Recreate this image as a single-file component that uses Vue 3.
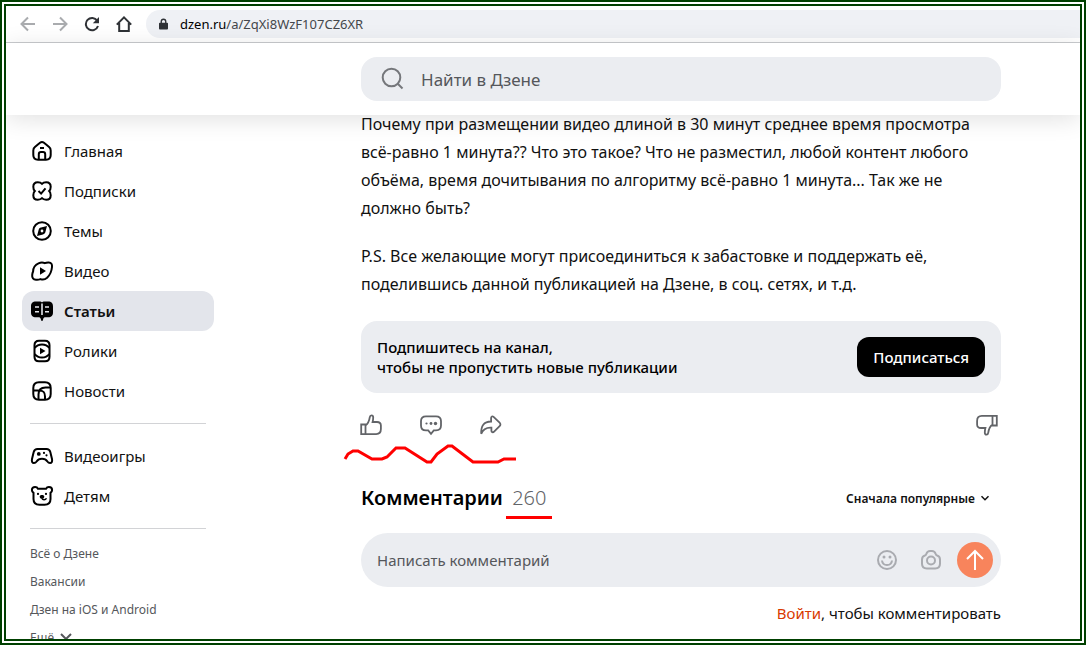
<template>
  <div class="frame">
    <nav class="browser-bar">
      <button class="nav-btn faded" aria-label="Назад">
        <svg viewBox="0 0 16 16"><path d="M15 8H2M8 1.5L1.5 8 8 14.5" /></svg>
      </button>
      <button class="nav-btn faded" aria-label="Вперёд">
        <svg viewBox="0 0 16 16"><path d="M1 8h13M8 1.5L14.5 8 8 14.5" /></svg>
      </button>
      <button class="nav-btn" aria-label="Обновить">
        <svg viewBox="0 0 16 16">
          <path d="M13.2 4.6A6.2 6.2 0 1 0 14 10" />
          <path class="solid" d="M15 1v6.2H8.8z" />
        </svg>
      </button>
      <button class="nav-btn" aria-label="Домой">
        <svg viewBox="0 0 16 16"><path d="M.8 8.6L8 1.4l7.2 7.2M3.2 7v8h9.6V7" /></svg>
      </button>
      <div class="address">
        <svg class="lock" viewBox="0 0 10 12">
          <path d="M1 4.5h8a1 1 0 0 1 1 1V11a1 1 0 0 1-1 1H1a1 1 0 0 1-1-1V5.500a1 1 0 0 1 1-1z" />
          <path class="shackle" d="M2.500 5V3.200a2.500 2.500 0 0 1 5 0V5" />
        </svg>
        <span>dzen.ru<span class="path">/a/ZqXi8WzF107CZ6XR</span></span>
      </div>
    </nav>

    <header class="header">
      <label class="search">
        <svg viewBox="0 0 24 24"><circle cx="10.500" cy="10.500" r="8.800" /><path d="M17 17l4.500 4.500" /></svg>
        <input type="search" placeholder="Найти в Дзене" aria-label="Найти в Дзене" />
      </label>
    </header>

    <div class="columns">
      <aside class="sidebar">
        <template v-for="(group, idx) in menu" :key="idx">
          <ul class="menu">
            <li v-for="item in group" :key="item.title">
              <a href="#" class="menu-item" :class="{ active: item.active }">
                <svg class="menu-icon" viewBox="0 0 24 24">
                  <path v-for="(p, i) in item.paths" :key="i" :d="p.d" :class="p.kind" />
                </svg>
                {{ item.title }}
              </a>
            </li>
          </ul>
          <hr />
        </template>
        <ul class="links">
          <li v-for="link in links" :key="link"><a href="#">{{ link }}</a></li>
          <li>
            <button class="more">
              Ещё
              <svg viewBox="0 0 12 12"><path d="M1 2l5 5 5-5" /></svg>
            </button>
          </li>
        </ul>
      </aside>

      <main class="article">
        <p>
          Почему при размещении видео длиной в 30 минут среднее время просмотра<br />
          всё-равно 1 минута?? Что это такое? Что не разместил, любой контент любого<br />
          объёма, время дочитывания по алгоритму всё-равно 1 минута... Так же не<br />
          должно быть?
        </p>
        <p>
          P.S. Все желающие могут присоединиться к забастовке и поддержать её,<br />
          поделившись данной публикацией на Дзене, в соц. сетях, и т.д.
        </p>

        <section class="subscribe">
          <div>Подпишитесь на канал,<br />чтобы не пропустить новые публикации</div>
          <button>Подписаться</button>
        </section>

        <div class="actions">
          <button aria-label="Нравится">
            <svg viewBox="0 0 24 24">
              <path d="M2.200 11.500h4.300v9.600H2.200zM6.500 12.500c3-2 3.800-5 4.300-8.300.2-1.300.8-1.900 1.700-1.900 1.200 0 1.700.9 1.700 2.200 0 1.700-.2 3-.6 4.500H18c2.500 0 3.900 1.300 3.900 3.600v3.500c0 3.300-1.500 5-4.700 5H6.500" />
            </svg>
          </button>
          <button aria-label="Комментарии">
            <svg viewBox="0 0 24 24">
              <path d="M7 3.300h10c3.500 0 5 1.500 5 4.800v4.500c0 3.300-1.500 4.800-5 4.800h-2.200L12 20.800l-2.800-3.400H7c-3.500 0-5-1.500-5-4.800V8.100c0-3.300 1.500-4.800 5-4.800z" />
              <circle class="dot" cx="7.500" cy="10.500" r="1.100" />
              <circle class="dot" cx="12" cy="10.500" r="1.400" />
              <circle class="dot" cx="16.500" cy="10.500" r="1.700" />
            </svg>
          </button>
          <button aria-label="Поделиться">
            <svg viewBox="0 0 24 24">
              <path d="M2.200 20.800c-.3-7.800 2.500-12.300 9.900-12.300V5c0-1.500 1.300-2.100 2.500-1.100l6 5.800c1.100 1.100 1.100 2.300 0 3.400l-5.500 5.500c-1.200 1.200-2.700.7-2.700-.9v-3c-5.300-.3-8.300 1.300-10.200 6.100z" />
            </svg>
          </button>
          <button class="dislike" aria-label="Не нравится">
            <svg viewBox="0 0 24 24">
              <path d="M21.800 12.500h-4.300V2.900h4.300zM17.500 11.500c-3 2-3.800 5-4.300 8.300-.2 1.300-.8 1.900-1.700 1.900-1.200 0-1.700-.9-1.700-2.200 0-1.700.2-3 .6-4.500H6c-2.500 0-3.900-1.300-3.900-3.600V7.900c0-3.300 1.500-5 4.700-5h10.700" />
            </svg>
          </button>
          <svg class="scribble" viewBox="0 0 174 22">
            <path d="M2 15l3-5 5-3h5l14 8h10l5-2 9-9h9l22 14h4l6-8 11-8h4l21 16h25l6-3h12" />
          </svg>
        </div>

        <div class="comments-head">
          <h2>Комментарии <span class="count">260</span></h2>
          <div class="sort">
            <select aria-label="Порядок комментариев">
              <option>Сначала популярные</option>
            </select>
            <svg viewBox="0 0 10 10"><path d="M1.500 3.200L5 6.700l3.500-3.500" /></svg>
          </div>
        </div>

        <form class="comment-box" @submit.prevent>
          <input v-model="comment" placeholder="Написать комментарий" aria-label="Написать комментарий" />
          <button type="button" class="tool" aria-label="Смайлики">
            <svg viewBox="0 0 24 24">
              <circle cx="12" cy="12" r="9" />
              <path d="M7 12.500c.3 2.800 2.200 4.500 5 4.500s4.700-1.700 5-4.500" />
              <circle class="dot" cx="9" cy="9" r="1.500" />
              <circle class="dot" cx="15" cy="9" r="1.500" />
            </svg>
          </button>
          <button type="button" class="tool" aria-label="Фото">
            <svg viewBox="0 0 24 24">
              <path d="M3 11.500c0-2.300.9-3.500 2.900-4 .8-.2 1.100-.6 1.400-1.500.7-2 1.700-3 3.700-3h2c2 0 3 1 3.700 3 .3.900.6 1.300 1.400 1.500 2 .5 2.900 1.700 2.900 4v4.300c0 3.500-1.500 4.700-4.800 4.700H7.800C4.500 20.500 3 19.300 3 15.800z" />
              <circle cx="12" cy="12.500" r="4" />
            </svg>
          </button>
          <button class="send" aria-label="Отправить">
            <svg viewBox="0 0 24 24"><path d="M12 22V3M4 11l8-8 8 8" /></svg>
          </button>
        </form>
        <div class="login"><a href="#">Войти</a>, чтобы комментировать</div>
      </main>
    </div>
  </div>
</template>

<script setup>
import { ref } from 'vue'

const comment = ref('')

const menu = [
  [
    {
      title: 'Главная',
      paths: [
        { d: 'M3.300 11.500c0-1.500.5-2.600 1.600-3.500L10 3.800c1.200-1 2.800-1 4 0L19.100 8c1.100.9 1.600 2 1.600 3.500V16c0 3.200-1.500 4.700-4.700 4.700H8c-3.200 0-4.700-1.500-4.700-4.700z' },
        { d: 'M8.800 20.500v-5.300c0-1.500.8-2.200 2.200-2.200h2c1.400 0 2.200.7 2.200 2.200v5.300M10 8.900h4' }
      ]
    },
    {
      title: 'Подписки',
      paths: [
        { d: 'M12 4.800c.9-1 2.400-1.500 4.200-1.500 3 0 4.500 1.500 4.500 4.500 0 1.800-.5 3.300-1.500 4.200 1 .9 1.500 2.400 1.500 4.200 0 3-1.500 4.500-4.500 4.500-1.800 0-3.300-.5-4.200-1.500-.9 1-2.400 1.500-4.200 1.500-3 0-4.500-1.500-4.500-4.500 0-1.800.5-3.300 1.500-4.200-1-.9-1.500-2.400-1.500-4.200 0-3 1.500-4.500 4.500-4.500 1.800 0 3.300.5 4.200 1.500z' },
        { d: 'M8.500 12l2.600 2.600L15.500 9.300' }
      ]
    },
    {
      title: 'Темы',
      paths: [
        { d: 'M12 3.200a8.800 8.800 0 1 1 0 17.600 8.800 8.800 0 1 1 0-17.600z' },
        { d: 'M17 7l-1.600 6c-.4 1.400-1 2-2.400 2.400L7 17l1.600-6c.4-1.400 1-2 2.400-2.400zM12 10.600a1.400 1.400 0 1 0 0 2.800 1.400 1.400 0 1 0 0-2.800z', kind: 'solid' }
      ]
    },
    {
      title: 'Видео',
      paths: [
        { d: 'M8.500 4.400c2.200-1 4.500-1 6.300-.2 1.200-.6 2.500-.8 4-.7 2.500.2 3.500 1.700 3.200 4.500-.4 4.300-2 8-4.900 10.800-2 1.800-4.300 2.200-6.600 1.300-1.500.6-3 .8-4.500.6-2.800-.2-4.100-1.800-3.800-4.700.1-1.300.4-2.500.9-3.500C3.200 8.700 5 6 8.500 4.400z' },
        { d: 'M10 8.300v7.400l6-3.700z', kind: 'solid' }
      ]
    },
    {
      title: 'Статьи',
      active: true,
      paths: [
        { d: 'M6 2.500h3.500c1.200 0 2 .3 2.500 1 .5-.7 1.300-1 2.500-1H18c3.500 0 5 1.500 5 5v5.800c0 3.500-1.500 5-5 5h-2.500c-1.300 0-2 .6-2.300 1.700l-.3 1.200c-.3 1-1.500 1-1.800 0l-.3-1.200c-.3-1.100-1-1.700-2.300-1.700H6c-3.500 0-5-1.500-5-5V7.500c0-3.500 1.500-5 5-5z', kind: 'solid' },
        { d: 'M12 4.500v11.500M5 8h4M5 12.800h4M15 8h4M15 12.800h4', kind: 'cut' }
      ]
    },
    {
      title: 'Ролики',
      paths: [
        { d: 'M9 1.800h6c3.200 0 4.500 1.300 4.500 4.500v11.400c0 3.200-1.300 4.500-4.500 4.500H9c-3.200 0-4.500-1.300-4.500-4.500V6.300c0-3.200 1.300-4.500 4.500-4.500z' },
        { d: 'M4.700 9C6.500 6.600 9 5.500 12 5.500s5.500 1.100 7.300 3.500M4.700 15c1.800 2.400 4.300 3.500 7.300 3.500s5.500-1.100 7.300-3.500' },
        { d: 'M10 8.700v6.600l5.500-3.300z', kind: 'solid' }
      ]
    },
    {
      title: 'Новости',
      paths: [
        { d: 'M9 3.300h6c4 0 5.700 1.700 5.700 5.700v6c0 4-1.700 5.700-5.700 5.700H9c-4 0-5.700-1.700-5.700-5.700V9c0-4 1.700-5.700 5.700-5.700z' },
        { d: 'M3.500 11.500H9c4.500 0 6 1.500 6 6v3M8.500 20.500v-5c0-5 2-7 7-7h5' }
      ]
    }
  ],
  [
    {
      title: 'Видеоигры',
      paths: [
        { d: 'M7.500 5h9c2 0 3.200 1 3.800 3l1.700 7c.5 2.500-.3 4-2 4-1.100 0-1.900-.5-2.600-1.500-1.300-2-2.500-2.700-5.400-2.700s-4.100.7-5.400 2.700C5.900 18.500 5.100 19 4 19c-1.700 0-2.500-1.500-2-4l1.700-7c.6-2 1.800-3 3.800-3z' },
        { d: 'M8.800 8a1.900 1.900 0 1 0 0 3.800 1.900 1.900 0 1 0 0-3.800zM14 7.800a1.100 1.100 0 1 0 0 2.200 1.100 1.100 0 1 0 0-2.200zM16.500 10.200a1.100 1.100 0 1 0 0 2.200 1.100 1.100 0 1 0 0-2.200z', kind: 'solid' }
      ]
    },
    {
      title: 'Детям',
      paths: [
        { d: 'M8 4.800h8c.5-1.100 1.500-1.900 2.900-1.900 1.900 0 3.200 1.300 3.200 3.200 0 1.300-.6 2.200-1.600 2.800V15c0 4-2 5.800-6 5.800h-5c-4 0-6-1.800-6-5.800V8.900c-1-.6-1.600-1.500-1.600-2.800 0-1.900 1.300-3.200 3.200-3.200 1.400 0 2.400.8 2.900 1.900z' },
        { d: 'M8 8.800a1.100 1.100 0 1 0 0 2.200 1.100 1.100 0 1 0 0-2.200zM16 8.800a1.100 1.100 0 1 0 0 2.200 1.100 1.100 0 1 0 0-2.200zM12 11c1.500 0 2.300.7 2.300 1.700 0 1.200-1.100 2.100-2.300 2.100s-2.300-.9-2.300-2.100c0-1 .8-1.700 2.300-1.700z', kind: 'solid' },
        { d: 'M12 14.500c.5 1.500 3.500 1.800 4.500-.3', kind: 'thin' }
      ]
    }
  ]
]

const links = ['Всё о Дзене', 'Вакансии', 'Дзен на iOS и Android']
</script>

<style>
body {
  margin: 0;
}
</style>

<style scoped>
.frame {
  box-sizing: border-box;
  height: 100vh;
  overflow: hidden;
  border: 6px double #004000;
  background: #fff;
  color: #111;
  font-family: "Noto Sans", "Open Sans", sans-serif;
  font-size: 15px;
}
.frame * {
  box-sizing: border-box;
}
svg {
  display: block;
  fill: none;
  stroke: currentColor;
  stroke-width: 2;
}
button {
  display: flex;
  align-items: center;
  justify-content: center;
  padding: 0;
  border: none;
  background: none;
  color: inherit;
  font: inherit;
  cursor: pointer;
}
input,
select {
  border: none;
  outline: none;
  background: none;
  font: inherit;
}
a {
  color: inherit;
  text-decoration: none;
}
ul {
  margin: 0;
  padding: 0;
  list-style: none;
}
.solid,
.dot {
  fill: currentColor;
  stroke: none;
  fill-rule: evenodd;
}

/* browser bar */
.browser-bar {
  display: flex;
  align-items: center;
  gap: 16px;
  height: 37px;
  padding-left: 14px;
  border-bottom: 1px solid #c9cbce;
}
.nav-btn {
  width: 16px;
  color: #2f3236;
}
.nav-btn svg {
  width: 16px;
  height: 16px;
}
.nav-btn.faded {
  color: #a9abae;
}
.address {
  flex: 1;
  display: flex;
  align-items: center;
  gap: 12px;
  height: 28px;
  margin-left: -2px;
  padding-left: 13px;
  border-radius: 14px 0 0 14px;
  background: #eff1f5;
  color: #000;
  font-size: 13px;
}
.address .path {
  color: #44474b;
}
.lock {
  width: 9px;
  height: 12px;
  fill: #2f3236;
  stroke: none;
}
.lock .shackle {
  fill: none;
  stroke: #2f3236;
  stroke-width: 1.500;
}

/* header */
.header {
  position: relative;
  z-index: 1;
  display: grid;
  grid-template-columns: 355px minmax(0, 640px);
  padding: 14px 0;
  background: #fff;
  box-shadow: 0 4px 24px rgba(0, 0, 0, 0.12);
}
.search {
  grid-column: 2;
  display: flex;
  align-items: center;
  gap: 16px;
  height: 44px;
  padding: 0 20px;
  border-radius: 16px;
  background: #ebedf1;
  color: #75777b;
}
.search svg {
  width: 24px;
  height: 24px;
}
.search input {
  flex: 1;
  padding: 0;
  font-size: 17px;
}
.search input::placeholder {
  color: #55575b;
  opacity: 1;
}

.columns {
  display: grid;
  grid-template-columns: 355px minmax(0, 640px);
  align-items: start;
}

/* sidebar */
.sidebar {
  width: 208px;
  padding: 16px 0 0 16px;
}
.menu-item {
  display: flex;
  align-items: center;
  gap: 10px;
  height: 40px;
  padding: 0 8px;
  border-radius: 12px;
}
.menu-item.active {
  background: #e3e5eb;
  font-weight: 600;
}
.menu-icon {
  width: 24px;
  height: 24px;
  color: #000;
}
.menu-icon .cut {
  stroke: #e3e5eb;
  stroke-width: 1.600;
}
.menu-icon .thin {
  stroke-width: 1.500;
}
hr {
  height: 1px;
  margin: 12px 8px;
  border: none;
  background: #d2d3d6;
}
.links {
  margin-top: -1px;
  padding-left: 8px;
  color: #55575b;
  font-size: 12px;
  line-height: 28px;
}
.more {
  gap: 6px;
}
.more svg {
  width: 12px;
  height: 12px;
}

/* article */
.article {
  margin-top: -5px;
}
p {
  margin: 0 0 20px;
  font-size: 16px;
  line-height: 28px;
  white-space: nowrap;
}
.subscribe {
  display: flex;
  align-items: center;
  justify-content: space-between;
  margin-top: 23px;
  padding: 16px;
  border-radius: 16px;
  background: #ebedf1;
  color: #000;
  font-size: 15px;
  font-weight: 500;
  line-height: 20px;
}
.subscribe button {
  height: 40px;
  padding: 0 16px;
  border-radius: 12px;
  background: #000;
  color: #fff;
}
.actions {
  position: relative;
  display: flex;
  gap: 36px;
  margin: 20px 2px 0 -2px;
  color: #626468;
}
.actions svg {
  width: 24px;
  height: 24px;
  stroke-width: 1.800;
}
.actions button {
  width: 24px;
}
.actions .dislike {
  margin-left: auto;
}
.actions .scribble {
  position: absolute;
  top: 31px;
  left: -16px;
  width: 174px;
  height: 22px;
  stroke: #f00;
  stroke-width: 3;
}
.comments-head {
  display: flex;
  align-items: center;
  justify-content: space-between;
  margin-top: 45px;
}
h2 {
  margin: 0;
  color: #000;
  font-size: 20px;
  font-weight: 600;
  line-height: 32px;
}
.count {
  position: relative;
  margin-left: 4px;
  color: #626468;
  font-weight: 300;
}
.count::after {
  content: "";
  position: absolute;
  right: -6px;
  bottom: -8px;
  left: -6px;
  height: 3px;
  background: #f00;
}
.sort {
  display: flex;
  align-items: center;
  gap: 5px;
  padding-right: 11px;
}
.sort select {
  appearance: none;
  padding: 0;
  color: #111;
  font-size: 12px;
  font-weight: 600;
}
.sort svg {
  width: 10px;
  height: 10px;
  stroke-width: 1.500;
}
.comment-box {
  display: flex;
  align-items: center;
  gap: 20px;
  height: 54px;
  margin-top: 19px;
  padding: 0 8px 0 16px;
  border-radius: 27px;
  background: #ebedf1;
}
.comment-box input {
  flex: 1;
  min-width: 0;
  padding: 0;
}
.comment-box input::placeholder {
  color: #55575b;
  opacity: 1;
}
.tool {
  color: #a9abb0;
}
.tool svg,
.send svg {
  width: 24px;
  height: 24px;
}
.send {
  width: 36px;
  height: 36px;
  margin-left: -6px;
  border-radius: 50%;
  background: #f8845c;
  color: #fff;
}
.login {
  margin-top: 16px;
  line-height: 20px;
  text-align: right;
}
.login a {
  color: #d93a00;
}
</style>
